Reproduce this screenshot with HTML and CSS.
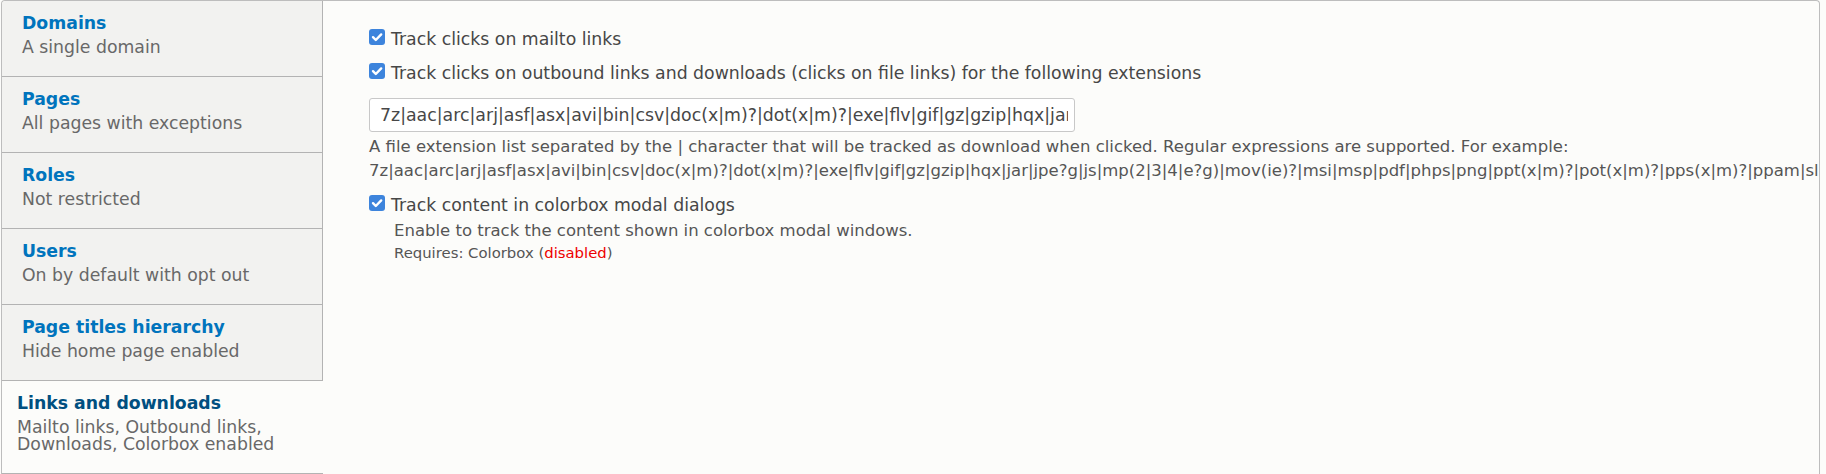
FILE: index.html
```html
<!DOCTYPE html>
<html>

<head>
    <title>Tracking scope</title>
    <meta charset="utf-8">
    <link rel="stylesheet" href="styles.css">
</head>

<body>
    <div class="vertical-tabs">
        <ul class="tabs-list">
            <li class="tab"><a href="#" class="tab-title">Domains</a><span class="tab-summary">A single domain</span></li>
            <li class="tab"><a href="#" class="tab-title">Pages</a><span class="tab-summary">All pages with exceptions</span></li>
            <li class="tab"><a href="#" class="tab-title">Roles</a><span class="tab-summary">Not restricted</span></li>
            <li class="tab"><a href="#" class="tab-title">Users</a><span class="tab-summary">On by default with opt out</span></li>
            <li class="tab"><a href="#" class="tab-title">Page titles hierarchy</a><span class="tab-summary">Hide home page enabled</span></li>
            <li class="tab selected"><a href="#" class="tab-title">Links and downloads</a><span class="tab-summary">Mailto links, Outbound links, Downloads, Colorbox enabled</span></li>
        </ul>
        <div class="pane">
            <div class="form-item checkbox">
                <span class="check"><svg width="16" height="16" viewBox="0 0 16 16"><rect width="16" height="16" rx="3" fill="#3d84dc"/><path d="M4 8.2l2.8 2.8L12.2 5.4" fill="none" stroke="#fff" stroke-width="2.4" stroke-linecap="round" stroke-linejoin="round"/></svg></span>
                <label>Track clicks on mailto links</label>
            </div>
            <div class="form-item checkbox">
                <span class="check"><svg width="16" height="16" viewBox="0 0 16 16"><rect width="16" height="16" rx="3" fill="#3d84dc"/><path d="M4 8.2l2.8 2.8L12.2 5.4" fill="none" stroke="#fff" stroke-width="2.4" stroke-linecap="round" stroke-linejoin="round"/></svg></span>
                <label>Track clicks on outbound links and downloads (clicks on file links) for the following extensions</label>
            </div>
            <div class="form-item textfield">
                <input type="text" class="form-text" value="7z|aac|arc|arj|asf|asx|avi|bin|csv|doc(x|m)?|dot(x|m)?|exe|flv|gif|gz|gzip|hqx|jar|jpe?g|js|mp(2|3|4|e?g)|mov(ie)?|msi|msp|pdf|phps|png|ppt(x|m)?|pot(x|m)?|pps(x|m)?|ppam|sld(x|m)?|thmx|qtm?|ra(m|r)?|sea|sit|tar|tgz|torrent|txt|wav|wma|wmv|wpd|xls(x|m|b)?|xlt(x|m)|xlam|xml|z|zip">
                <div class="description">A file extension list separated by the | character that will be tracked as download when clicked. Regular expressions are supported. For example:
                    <span class="example">7z|aac|arc|arj|asf|asx|avi|bin|csv|doc(x|m)?|dot(x|m)?|exe|flv|gif|gz|gzip|hqx|jar|jpe?g|js|mp(2|3|4|e?g)|mov(ie)?|msi|msp|pdf|phps|png|ppt(x|m)?|pot(x|m)?|pps(x|m)?|ppam|sld(x|m)?|thmx|qtm?|ra(m|r)?|sea|sit|tar|tgz|torrent|txt|wav|wma|wmv|wpd|xls(x|m|b)?|xlt(x|m)|xlam|xml|z|zip</span>
                </div>
            </div>
            <div class="form-item checkbox colorbox">
                <span class="check"><svg width="16" height="16" viewBox="0 0 16 16"><rect width="16" height="16" rx="3" fill="#3d84dc"/><path d="M4 8.2l2.8 2.8L12.2 5.4" fill="none" stroke="#fff" stroke-width="2.4" stroke-linecap="round" stroke-linejoin="round"/></svg></span>
                <label>Track content in colorbox modal dialogs</label>
            </div>
            <div class="sub-description">
                <div class="description">Enable to track the content shown in colorbox modal windows.</div>
                <div class="requires">Requires: Colorbox (<span class="disabled">disabled</span>)</div>
            </div>
        </div>
    </div>
</body>

</html>
```

FILE: styles.css
```css
body {
    margin: 0;
    font-family: 'DejaVu Sans', sans-serif;
    font-size: 17.3px;
    color: #474747;
    background: #fcfcfa;
}

.vertical-tabs {
    display: flex;
    width: 1819px;
    margin-left: 1px;
    border: 1px solid #bdbdbd;
    border-bottom: 0;
    border-radius: 4px 4px 0 0;
    background: #fcfcfa;
    box-sizing: border-box;
    height: 474px;
}

.tabs-list {
    width: 321px;
    flex: none;
    margin: 0;
    padding: 0;
    list-style: none;
    background: #f2f2f0;
    border-right: 1px solid #b3b3b3;
    box-sizing: border-box;
    border-top-left-radius: 4px;
}

.tab {
    display: flex;
    flex-direction: column;
    padding: 10px 18px 20px 20px;
    border-bottom: 1px solid #b3b3b3;
    line-height: 24px;
}

.tab-title {
    color: #0074bd;
    font-weight: bold;
    text-decoration: none;
}

.tab-summary {
    color: #686868;
    margin-top: 4px;
    line-height: 17px;
}

.tab.selected {
    background: #fcfcfa;
    margin-right: -1px;
    padding-left: 15px;
    position: relative;
}

.tab.selected .tab-title {
    color: #004f80;
}

.pane {
    flex: 1;
    min-width: 0;
    overflow: hidden;
    padding: 26px 0 0 46px;
}

.checkbox {
    display: flex;
    align-items: flex-start;
    line-height: 24px;
    margin-bottom: 10px;
}

.check {
    display: flex;
    margin: 2px 6px 0 0;
}

.check svg {
    display: block;
}

.textfield {
    margin-top: 13px;
}

.form-text {
    display: block;
    width: 706px;
    height: 34px;
    box-sizing: border-box;
    padding: 0 6px 0 10px;
    border: 1px solid #c8c8c8;
    border-radius: 3px;
    background: #fff;
    font-family: 'DejaVu Sans', sans-serif;
    font-size: 17.35px;
    color: #474747;
}

.description {
    font-size: 16.5px;
    line-height: 24px;
    color: #555;
}

.textfield .description {
    margin: 3px 0 10px;
}

.example {
    display: block;
    white-space: nowrap;
}

.colorbox {
    margin-bottom: 2px;
}

.sub-description {
    margin-left: 25px;
}

.requires {
    font-size: 14.85px;
    line-height: 20px;
    color: #555;
}

.disabled {
    color: #e00;
}
```
